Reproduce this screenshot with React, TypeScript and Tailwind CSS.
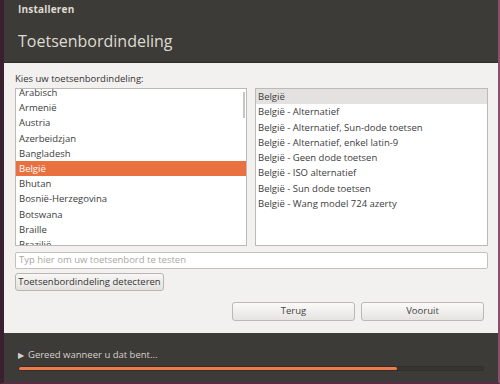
const layouts = [
  'Arabisch',
  'Armenië',
  'Austria',
  'Azerbeidzjan',
  'Bangladesh',
  'België',
  'Bhutan',
  'Bosnië-Herzegovina',
  'Botswana',
  'Braille',
  'Brazilië',
];

const variants = [
  'België',
  'België - Alternatief',
  'België - Alternatief, Sun-dode toetsen',
  'België - Alternatief, enkel latin-9',
  'België - Geen dode toetsen',
  'België - ISO alternatief',
  'België - Sun dode toetsen',
  'België - Wang model 724 azerty',
];

export default function App() {
  return (
    <div
      className="w-[500px] h-[384px] flex flex-col bg-[#3c3b37] border-l-4 border-l-[#3a1f2e] border-r-2 border-r-[#8a4f6e] border-b-2 border-b-[#5a2b45] overflow-hidden"
      style={{ fontFamily: '"Open Sans", "Noto Sans", sans-serif' }}
    >
      {/* header */}
      <div className="h-[63px] flex flex-col px-[14px] text-[#dfdbd2] border-b border-b-[#2f2e2b]">
        <div className="h-[19px] flex items-center text-[10px] font-bold tracking-[0.2px]">Installeren</div>
        <div className="mt-[11px] text-[16px] leading-[22px]">Toetsenbordindeling</div>
      </div>

      {/* content */}
      <div className="h-[270px] bg-[#f2f1f0] flex flex-col pl-[11px] pr-[8px] text-[#3c3c3c] text-[9.5px]">
        <div className="mt-[9px] h-[14px] leading-[14px] text-[#333]">Kies uw toetsenbordindeling:</div>
        <div className="mt-[2px] flex gap-[8px] h-[158px]">
          <div className="relative w-[232px] h-full bg-white border border-[#bdbab5] overflow-hidden">
            <div className="-mt-[4px]">
              {layouts.map((l) => (
                <div
                  key={l}
                  className={
                    l === 'België'
                      ? 'h-[15.2px] leading-[15.2px] pl-[3px] bg-[#e9703f] text-white'
                      : 'h-[15.2px] leading-[15.2px] pl-[3px]'
                  }
                >
                  {l}
                </div>
              ))}
            </div>
            <div className="absolute right-[1px] top-[3px] w-[2px] h-[26px] bg-[#c8c6c2]" />
          </div>
          <div className="w-[233px] h-full bg-white border border-[#bdbab5] overflow-hidden">
            {variants.map((v, i) => (
              <div
                key={v}
                className={
                  i === 0
                    ? 'h-[15.3px] leading-[15.3px] pl-[2px] bg-[#e3e2e0]'
                    : 'h-[15.3px] leading-[15.3px] pl-[2px]'
                }
              >
                {v}
              </div>
            ))}
          </div>
        </div>
        <div className="mt-[6px] h-[17px] w-[473px] bg-white border border-[#c4c1bc] rounded-[2px] flex items-center pl-[3px] text-[#a9a7a3]">
          Typ hier om uw toetsenbord te testen
        </div>
        <div className="mt-[4px] h-[18px] w-[149px] flex items-center justify-center bg-gradient-to-b from-[#f8f7f6] to-[#e4e2df] border border-[#b9b6b1] rounded-[3px] text-[#333]">
          Toetsenbordindeling detecteren
        </div>
        <div className="mt-[11px] flex justify-end gap-[6px] pr-[6px]">
          <div className="h-[19px] w-[123px] flex items-center justify-center bg-gradient-to-b from-[#fbfaf9] to-[#e6e4e1] border border-[#bcb9b4] rounded-[3px] text-[#444]">
            Terug
          </div>
          <div className="h-[19px] w-[123px] flex items-center justify-center bg-gradient-to-b from-[#fbfaf9] to-[#e6e4e1] border border-[#bcb9b4] rounded-[3px] text-[#444]">
            Vooruit
          </div>
        </div>
      </div>

      {/* footer */}
      <div className="flex-1 flex flex-col px-[14px] pt-[16px]">
        <div className="flex items-center h-[12px] text-[9.5px] text-[#d6d2ca]">
          <span className="text-[8px] mr-[4px]">▶</span>
          Gereed wanneer u dat bent...
        </div>
        <div className="mt-[5px] h-[5px] w-[466px] rounded-full bg-[#35342f] border border-[#302f2b]">
          <div className="h-full w-[378px] rounded-full bg-[#ef7b4b]" />
        </div>
      </div>
    </div>
  );
}
